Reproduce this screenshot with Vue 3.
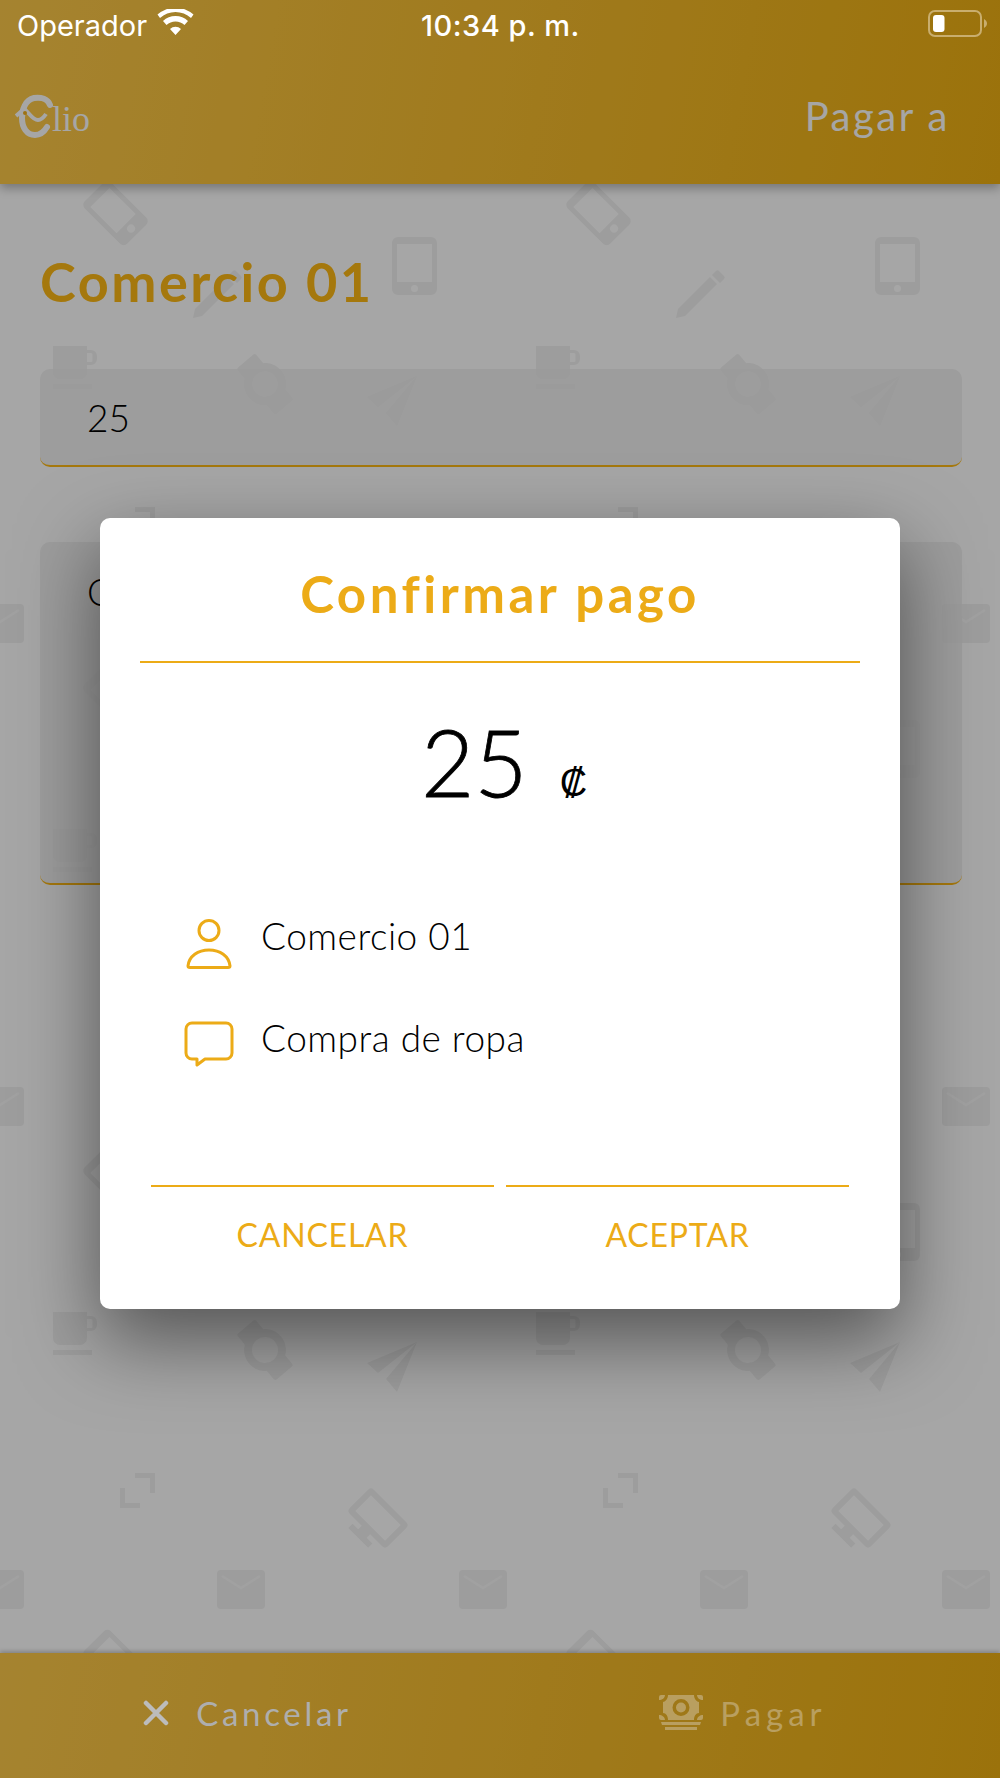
<script setup>
const rows = [
  { label: 'Comercio 01', icon: 'person' },
  { label: 'Compra de ropa', icon: 'bubble' }
]
</script>

<template>
  <div class="screen">
    <svg class="wallpaper" width="1000" height="1778" aria-hidden="true">
      <defs>
        <pattern id="tile" x="0" y="0" width="483" height="483" patternUnits="userSpaceOnUse">
          <g fill="#f2f2f2">
            <!-- rotated phone -->
            <g transform="rotate(-45 115.500 213)">
              <path fill-rule="evenodd" d="M97 188a5 5 0 0 1 5-5h27a5 5 0 0 1 5 5v50a5 5 0 0 1-5 5h-27a5 5 0 0 1-5-5zM102 191v37h27v-37zM115.500 231a4 4 0 1 0 0 8 4 4 0 0 0 0-8z"/>
            </g>
            <!-- tablet -->
            <path fill-rule="evenodd" d="M392 243a6 6 0 0 1 6-6h33a6 6 0 0 1 6 6v46a6 6 0 0 1-6 6h-33a6 6 0 0 1-6-6zM397 244v38h35v-38zM414.500 285a3.500 3.500 0 1 0 0 7 3.500 3.500 0 0 0 0-7z"/>
            <!-- pencil -->
            <path d="M195 309l32-32 7 7-32 32-9 2zM229 275l4-4a2 2 0 0 1 3 0l5 5a2 2 0 0 1 0 3l-4 4z"/>
            <!-- watch -->
            <g transform="rotate(-40 265 384)">
              <rect x="253" y="354" width="24" height="60" rx="2"/>
              <circle cx="265" cy="384" r="21"/>
              <circle cx="265" cy="384" r="13" fill="#fff"/>
            </g>
            <!-- mug -->
            <path fill-rule="evenodd" d="M53 346h34v4h4a6 6 0 0 1 6 6v3a6 6 0 0 1-6 6h-4v7a7 7 0 0 1-7 7H60a7 7 0 0 1-7-7zM87 353v9h4a1.500 1.500 0 0 0 1.500-1.500v-6a1.500 1.500 0 0 0-1.500-1.500zM53 384h39v5H53z"/>
            <!-- paper plane -->
            <path d="M417 376l-50 21 11 10zM417 376l-31 37 11 13z"/>
            <!-- expand -->
            <path d="M135 24h20v20h-5V29h-15zM120 39h5v15h15v5h-20z"/>
            <!-- monitor on a stand -->
            <g transform="rotate(45 378 69)">
              <path fill-rule="evenodd" d="M351 56a4 4 0 0 1 4-4h46a4 4 0 0 1 4 4v26a4 4 0 0 1-4 4h-46a4 4 0 0 1-4-4zM357 58v22h42V58zM372 86h12v5h8v6h-28v-6h8z"/>
            </g>
            <!-- mail -->
            <path d="M221 121h40a4 4 0 0 1 4 4v31a4 4 0 0 1-4 4h-40a4 4 0 0 1-4-4v-31a4 4 0 0 1 4-4z"/>
            <path d="M222 127l19 12 19-12" fill="none" stroke="#f8f8f8" stroke-width="2.500"/>
            <g transform="translate(242 0)">
              <path d="M221 121h40a4 4 0 0 1 4 4v31a4 4 0 0 1-4 4h-40a4 4 0 0 1-4-4v-31a4 4 0 0 1 4-4z"/>
              <path d="M222 127l19 12 19-12" fill="none" stroke="#f8f8f8" stroke-width="2.500"/>
            </g>
            <g transform="translate(-241 0)">
              <path d="M221 121h40a4 4 0 0 1 4 4v31a4 4 0 0 1-4 4h-40a4 4 0 0 1-4-4v-31a4 4 0 0 1 4-4z"/>
              <path d="M222 127l19 12 19-12" fill="none" stroke="#f8f8f8" stroke-width="2.500"/>
            </g>
          </g>
        </pattern>
      </defs>
      <rect width="1000" height="1778" fill="url(#tile)"/>
    </svg>

    <header class="app-header">
      <svg class="logo-mark" width="46" height="46" viewBox="0 0 46 46" aria-hidden="true">
        <path d="M35 12C33 6 26 4 19 5 10 7 7 17 7 25c0 10 5 17 13 17 5 0 9-3 12-8" fill="none" stroke="#fff" stroke-width="6" stroke-linecap="round"/>
        <path d="M1 23l8-7c5 3 8 11 14 11 4 0 6-3 8-6" fill="none" stroke="#fff" stroke-width="4"/>
        <circle cx="10" cy="20" r="2" fill="#f2b01e"/>
      </svg>
      <span class="logo-text">lio</span>
      <span class="header-title">Pagar a</span>
    </header>

    <main class="form">
      <h1 class="merchant">Comercio 01</h1>
      <div class="field field-amount">25</div>
      <div class="field field-note">Compra de ropa</div>
    </main>

    <footer class="app-footer">
      <div class="footer-action">
        <svg width="26" height="26" viewBox="0 0 26 26" aria-hidden="true">
          <path d="M3 3l20 20M23 3L3 23" stroke="#bcbcbc" stroke-width="4.500" stroke-linecap="round"/>
        </svg>
        <span class="footer-cancel">Cancelar</span>
      </div>
      <div class="footer-action footer-pay">
        <svg width="46" height="38" viewBox="0 0 46 38" aria-hidden="true">
          <g fill="#b99f60">
            <path fill-rule="evenodd" d="M10 1h26c0 4 3 7 5 7v11c-3 0-5 3-5 7H10c0-4-2-7-5-7V8c2 0 5-3 5-7zM23 5a8.500 8.500 0 1 0 0 17 8.500 8.500 0 0 0 0-17zM23 8.500a5 5 0 1 1 0 10 5 5 0 0 1 0-10z"/>
            <path d="M1 3a2 2 0 0 1 2-2h4c0 3-3 5-6 5zM45 3a2 2 0 0 0-2-2h-4c0 3 3 5 6 5zM1 21c3 0 6 2 6 5H3a2 2 0 0 1-2-2zM45 21c-3 0-6 2-6 5h4a2 2 0 0 0 2-2z"/>
            <path d="M3 28h40l-1 3H4zM7 33h32v3H7z"/>
          </g>
        </svg>
        <span class="footer-pay-label">Pagar</span>
      </div>
    </footer>

    <div class="scrim">
      <section class="dialog">
        <h2 class="dialog-title">Confirmar pago</h2>
        <div class="amount">
          <span class="amount-value">25</span>
          <span class="amount-unit">₡</span>
        </div>
        <ul class="details">
          <li v-for="row in rows" :key="row.label" class="detail">
            <svg v-if="row.icon === 'person'" width="50" height="52" viewBox="0 0 50 52" aria-hidden="true">
              <circle cx="25" cy="12.500" r="10" fill="none" stroke="#ecab17" stroke-width="3"/>
              <path d="M4 48c1-10 10-16 21-16s20 6 21 16c0 1-1 1.500-2 1.500H6c-1 0-2-.5-2-1.500z" fill="none" stroke="#ecab17" stroke-width="3" stroke-linejoin="round"/>
            </svg>
            <svg v-else width="50" height="50" viewBox="0 0 50 50" aria-hidden="true">
              <path d="M8 2h34a6 6 0 0 1 6 6v24a6 6 0 0 1-6 6H21l-8 6v-6H8a6 6 0 0 1-6-6V8a6 6 0 0 1 6-6z" fill="none" stroke="#ecab17" stroke-width="3" stroke-linejoin="round"/>
            </svg>
            <span class="detail-label">{{ row.label }}</span>
          </li>
        </ul>
        <div class="actions">
          <button class="action" type="button">CANCELAR</button>
          <button class="action" type="button">ACEPTAR</button>
        </div>
      </section>
    </div>

    <div class="status-bar">
      <span class="carrier">Operador</span>
      <svg class="wifi" width="37" height="27" viewBox="0 0 37 27" aria-hidden="true">
        <path d="M18.500 26l-5.500-6a8 8 0 0 1 11 0zM9.500 16l-3.500-4a18 18 0 0 1 25 0l-3.500 4a13 13 0 0 0-18 0zM3 9L.5 5.500a27 27 0 0 1 36 0L34 9a23 23 0 0 0-31 0z" fill="#fff"/>
      </svg>
      <span class="clock">10:34 p. m.</span>
      <svg class="battery" width="60" height="28" viewBox="0 0 60 28" aria-hidden="true">
        <rect x="1" y="1" width="52" height="25" rx="6" fill="none" stroke="#c9ae6e" stroke-width="2"/>
        <rect x="5" y="5" width="11.500" height="17" rx="3" fill="#fff"/>
        <path d="M56 9c2 1 3 3 3 4.500s-1 3.500-3 4.500z" fill="#c9ae6e"/>
      </svg>
    </div>
  </div>
</template>

<style>
html, body { margin: 0; padding: 0; }
</style>

<style scoped>
.screen {
  position: relative;
  width: 1000px;
  height: 1778px;
  overflow: hidden;
  display: flex;
  flex-direction: column;
  background: #ffffff;
  font-family: Lato, "Noto Sans", sans-serif;
}
.wallpaper { position: absolute; left: 0; top: 0; }
.app-header {
  position: relative;
  height: 184px;
  flex: none;
  box-sizing: border-box;
  padding: 93px 50px 0 15px;
  display: flex;
  align-items: flex-start;
  background: linear-gradient(100deg, #feca4a, #efb012);
  box-shadow: 0 4px 10px rgba(0, 0, 0, .3);
}
.logo-mark { flex: none; margin-right: -9px; }
.logo-text {
  font-family: "Liberation Serif", serif;
  font-size: 36px;
  line-height: 42px;
  color: #ffffff;
  margin-top: 5px;
}
.header-title {
  margin-left: auto;
  font-size: 40px;
  line-height: 46px;
  letter-spacing: 2.500px;
  color: #ffffff;
  margin-top: 0;
}
.form {
  position: relative;
  flex: 1;
  padding: 0 38px 0 40px;
}
.merchant {
  margin: 64px 0 53px;
  font-size: 54px;
  line-height: 68px;
  font-weight: 700;
  letter-spacing: 2.500px;
  color: #fdb914;
}
.field {
  box-sizing: border-box;
  border-bottom: 2px solid #fdb914;
  border-radius: 10px;
  background: rgba(236, 236, 236, .75);
  padding: 0 47px;
  font-size: 37px;
  color: #000;
}
.field-amount { height: 98px; line-height: 98px; font-weight: 300; margin-bottom: 75px; }
.field-note { height: 343px; line-height: 100px; font-weight: 300; }
.app-footer {
  position: relative;
  height: 125px;
  flex: none;
  display: flex;
  background: linear-gradient(100deg, #feca4a, #efb012);
  box-shadow: 0 -2px 4px rgba(0, 0, 0, .2);
}
.footer-action {
  position: relative;
  z-index: 2;
  flex: 1;
  display: flex;
  align-items: center;
  justify-content: center;
  gap: 27px;
  padding-bottom: 6px;
}
.footer-action svg { flex: none; }
.footer-cancel {
  font-size: 33px;
  letter-spacing: 3.700px;
  color: #aeaeae;
}
.footer-pay { gap: 16px; padding-right: 10px; }
.footer-pay-label {
  font-size: 33px;
  letter-spacing: 5px;
  color: #b99f60;
}
.scrim {
  position: absolute;
  inset: 0;
  background: rgba(0, 0, 0, .35);
}
.dialog {
  position: absolute;
  left: 100px;
  top: 518px;
  width: 800px;
  height: 791px;
  box-sizing: border-box;
  padding: 0 40px;
  background: #fff;
  border-radius: 10px;
  box-shadow: 0 30px 80px rgba(0, 0, 0, .5);
  display: flex;
  flex-direction: column;
}
.dialog-title {
  margin: 0;
  height: 145px;
  box-sizing: border-box;
  border-bottom: 2px solid #ecab17;
  text-align: center;
  font-size: 51px;
  line-height: 152px;
  font-weight: 700;
  letter-spacing: 3.500px;
  color: #ecab17;
}
.amount {
  display: flex;
  justify-content: center;
  align-items: baseline;
  gap: 32px;
  height: 110px;
  margin-top: 44px;
  padding-left: 8px;
}
.amount-value {
  font-size: 92px;
  line-height: 110px;
  font-weight: 300;
  color: #000;
  -webkit-text-stroke: .8px #000;
}
.amount-unit {
  font-size: 38px;
  font-family: "Liberation Sans", sans-serif;
  font-weight: 400;
  color: #000;
  position: relative;
  top: -1px;
}
.details {
  list-style: none;
  margin: 101px 0 0;
  padding: 0 0 0 44px;
  display: flex;
  flex-direction: column;
  gap: 50px;
}
.detail {
  display: flex;
  align-items: center;
  gap: 27px;
  height: 52px;
}
.detail-label {
  font-size: 37px;
  font-weight: 300;
  letter-spacing: .5px;
  color: #000;
  padding-bottom: 17px;
}
.actions {
  margin-top: auto;
  display: flex;
  gap: 12px;
  padding: 0 11px 34px;
}
.action {
  flex: 1;
  height: 90px;
  padding: 6px 0 0;
  border: 0;
  border-top: 2px solid #ecab17;
  background: none;
  font: 400 32px Lato, "Noto Sans", sans-serif;
  letter-spacing: .8px;
  color: #ecab17;
}
.status-bar {
  position: absolute;
  left: 0;
  top: 0;
  right: 0;
  height: 50px;
  display: flex;
  align-items: center;
  padding: 0 0 0 17px;
  font-family: Inter, Roboto, sans-serif;
  color: #fff;
}
.carrier { font-size: 29px; font-weight: 400; }
.wifi { margin-left: 10px; margin-top: -6px; }
.clock { position: absolute; left: 421px; font-size: 29px; font-weight: 500; letter-spacing: .5px; }
.battery { position: absolute; left: 928px; top: 10px; }
</style>
